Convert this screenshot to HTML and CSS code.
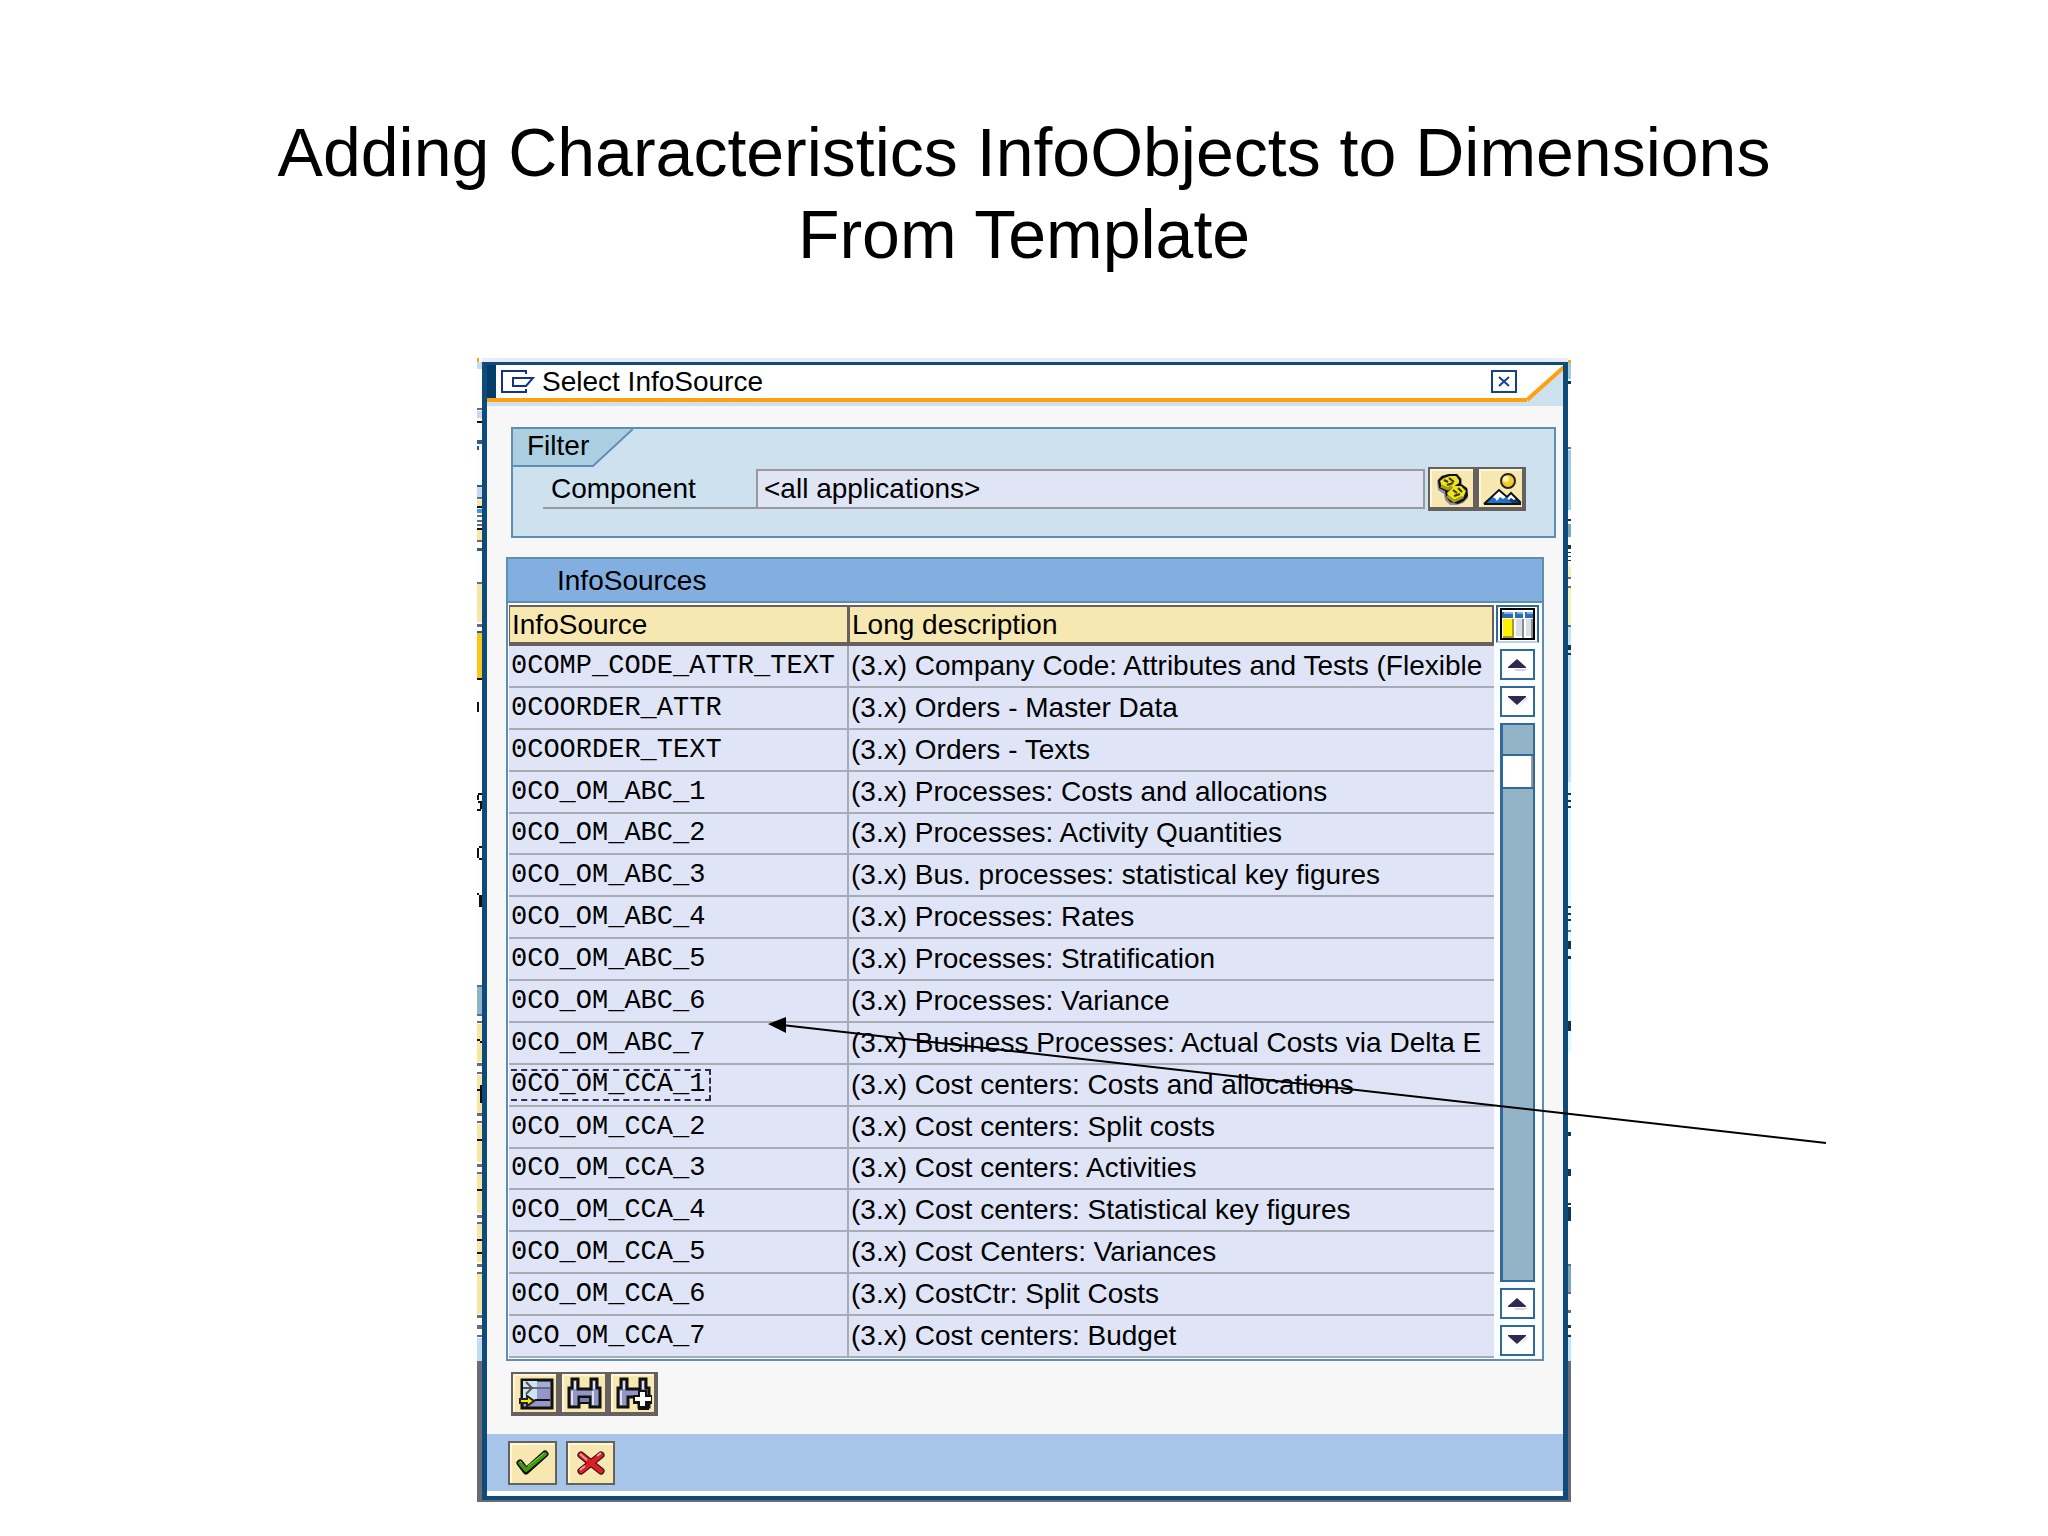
FILE: index.html
```html
<!DOCTYPE html>
<html lang="en">
<head>
    <meta charset="utf-8">
    <title>Adding Characteristics InfoObjects to Dimensions</title>
    <link rel="stylesheet" href="styles.css">
</head>
<body>
    <h1>Adding Characteristics InfoObjects to Dimensions<br>From Template</h1>

    <div class="figure">
        <!-- window behind the dialog, left edge -->
        <svg class="edge" viewBox="0 0 5 1144" preserveAspectRatio="none" shape-rendering="crispEdges">
            <path fill="#fdfdfd" d="M0 0h5v1144H0z"/>
            <path fill="#c5dcf0" d="M0 4h5v7H0zM0 53h5v7H0zM0 129h5v10H0zM0 980h5v23H0z"/>
            <path fill="#ffa010" d="M0 0h2v4H0z"/>
            <path fill="#f7e7a5" d="M0 142h5v6H0zM0 172h5v10H0zM0 226h5v38H0zM0 666h5v38H0zM0 717h5v38H0zM0 766h5v38H0zM0 816h5v39H0zM0 866h5v38H0zM0 916h5v40H0z"/>
            <path fill="#fcc41c" d="M0 275h5v46H0z"/>
            <path fill="#8fb4c6" d="M0 627h5v31H0z"/>
            <path fill="#3a9cec" d="M0 151h5v4H0z"/>
            <path fill="#2b5f8c" d="M0 82h5v4H0zM0 88h2v4H0zM0 127h5v2H0zM0 190h5v3H0zM0 273h5v2H0z"/>
            <path fill="#6b6b75" d="M0 50h5v2H0zM0 139h5v2H0zM0 157h5v2H0zM0 162h5v2H0zM0 166h5v2H0zM0 182h5v2H0zM0 224h5v2H0zM0 266h5v3H0zM0 627h5v2H0zM0 656h5v2H0zM0 663h5v2H0zM0 705h5v3H0zM0 714h5v2H0zM0 755h5v3H0zM0 763h5v2H0zM0 806h5v3H0zM0 814h5v2H0zM0 857h5v3H0zM0 864h5v2H0zM0 906h5v3H0zM0 914h5v2H0zM0 957h5v3H0zM0 967h5v4H0zM0 977h5v2H0zM0 1003h5v141H0z"/>
            <path fill="#111" d="M0 63h5v2H0zM0 148h5v2H0zM0 170h5v2H0zM0 320h5v2H0zM0 344h2v10H0zM1 435h4v2H1zM0 437h2v5H0zM1 443h4v2H1zM3 445h2v6H3zM0 451h4v2H0zM2 488h3v2H2zM0 490h2v10H0zM2 500h3v2H2zM0 535h2v2H0zM2 537h3v12H2zM0 681h3v2H0zM3 683h2v2H3zM0 731h5v2H0zM3 727h2v18H3zM0 781h5v2H0zM0 831h5v2H0zM0 881h5v2H0zM0 894h5v2H0z"/>
        </svg>

        <div class="dialog">
            <div class="titlebar">
                <div class="title">
                    <svg width="34" height="23" viewBox="0 0 34 23" fill="none" stroke="#14318c" stroke-width="2">
                        <path d="M25 4V1H1v21h24v-3"/>
                        <path d="M12 8h20l-7 8H12z"/>
                    </svg>
                    <span>Select InfoSource</span>
                    <button class="close" aria-label="Close">
                        <svg width="12" height="11" viewBox="0 0 12 11" stroke="#14418c" stroke-width="2"><path d="M1 1l10 9M11 1L1 10"/></svg>
                    </button>
                </div>
                <svg class="corner" viewBox="0 0 36 37" preserveAspectRatio="none">
                    <path fill="#cde1ee" d="M0 37L36 4v33z"/>
                    <path d="M0 35L37 2" stroke="#ffa010" stroke-width="4"/>
                </svg>
            </div>

            <div class="body">
                <div class="filter">
                    <div class="tab">
                        <svg viewBox="0 0 120 38" width="120" height="38">
                            <path d="M0 0h120L80 37H0z" fill="#abcfe0"/>
                            <path d="M120 0L80 37H0" fill="none" stroke="#5e8fb2" stroke-width="2"/>
                        </svg>
                        <span>Filter</span>
                    </div>
                    <div class="field">
                        <label for="component">Component</label>
                        <input id="component" type="text" value="&lt;all applications&gt;" readonly>
                        <div class="buttons">
                            <button aria-label="Select component">
                                <svg width="36" height="34" viewBox="0 0 36 34">
                                    <path d="M2 9l4-5 7-2h9l5 5v5l6 5v9l-5 5-6 2h-7l-5-5-1-6-6-4z" fill="#8d8ab0"/>
                                    <path d="M3 8l4-4 7-2h8l4 5v5l6 4 1 8-4 5-6 3-8-2-4-5-1-6-6-3z" fill="#111"/>
                                    <path d="M5 9l4-3 6-2h6l3 4v3l-9 6-8-2zM12 21l7-7h7l5 5-3 7-7 3-7-3z" fill="#ece420"/>
                                    <path d="M6 14l7 3 4-3M12 24l7 5 9-4" stroke="#a89e10" stroke-width="3" fill="none"/>
                                    <path d="M9 8l4 2M14 6l5 4M12 13l6-2M18 18l4 3M23 16l4 4M19 24l6-2" stroke="#3a3608" stroke-width="2"/>
                                </svg>
                            </button>
                            <button aria-label="Overview">
                                <svg width="38" height="34" viewBox="0 0 38 34">
                                    <circle cx="25" cy="9" r="7" fill="#f6c930" stroke="#222" stroke-width="2"/>
                                    <circle cx="23" cy="7" r="3" fill="#fff6a8"/>
                                    <path d="M16 33l12-12 10 10v2z" fill="#123c7c"/>
                                    <path d="M23 26l5-5 6 5-3 2-3-2-3 3z" fill="#fff"/>
                                    <path d="M1 32l15-14 14 14z" fill="#1d74cc"/>
                                    <path d="M9 25l7-7 7 7-3 2-3-2-3 4-2-3z" fill="#fff"/>
                                    <path d="M1 32l15-14 8 7 4-4 10 10M1 32h37" stroke="#111" stroke-width="2" fill="none"/>
                                </svg>
                            </button>
                        </div>
                    </div>
                </div>

                <div class="panel">
                    <h2>InfoSources</h2>
                    <div class="list">
                        <table>
                            <thead>
                                <tr><th class="name">InfoSource</th><th>Long description</th></tr>
                            </thead>
                            <tbody>
                                <tr><td class="name">0COMP_CODE_ATTR_TEXT</td><td>(3.x) Company Code: Attributes and Tests (Flexible</td></tr>
                                <tr><td class="name">0COORDER_ATTR</td><td>(3.x) Orders - Master Data</td></tr>
                                <tr><td class="name">0COORDER_TEXT</td><td>(3.x) Orders - Texts</td></tr>
                                <tr><td class="name">0CO_OM_ABC_1</td><td>(3.x) Processes: Costs and allocations</td></tr>
                                <tr><td class="name">0CO_OM_ABC_2</td><td>(3.x) Processes: Activity Quantities</td></tr>
                                <tr><td class="name">0CO_OM_ABC_3</td><td>(3.x) Bus. processes: statistical key figures</td></tr>
                                <tr><td class="name">0CO_OM_ABC_4</td><td>(3.x) Processes: Rates</td></tr>
                                <tr><td class="name">0CO_OM_ABC_5</td><td>(3.x) Processes: Stratification</td></tr>
                                <tr><td class="name">0CO_OM_ABC_6</td><td>(3.x) Processes: Variance</td></tr>
                                <tr><td class="name">0CO_OM_ABC_7</td><td>(3.x) Business Processes: Actual Costs via Delta E</td></tr>
                                <tr><td class="name"><span class="focused">0CO_OM_CCA_1</span></td><td>(3.x) Cost centers: Costs and allocations</td></tr>
                                <tr><td class="name">0CO_OM_CCA_2</td><td>(3.x) Cost centers: Split costs</td></tr>
                                <tr><td class="name">0CO_OM_CCA_3</td><td>(3.x) Cost centers: Activities</td></tr>
                                <tr><td class="name">0CO_OM_CCA_4</td><td>(3.x) Cost centers: Statistical key figures</td></tr>
                                <tr><td class="name">0CO_OM_CCA_5</td><td>(3.x) Cost Centers: Variances</td></tr>
                                <tr><td class="name">0CO_OM_CCA_6</td><td>(3.x) CostCtr: Split Costs</td></tr>
                                <tr><td class="name">0CO_OM_CCA_7</td><td>(3.x) Cost centers: Budget</td></tr>
                            </tbody>
                        </table>

                        <div class="side">
                            <button class="config" aria-label="Configure columns">
                                <svg width="35" height="32" viewBox="0 0 35 32" shape-rendering="crispEdges">
                                    <path fill="#000" d="M0 0h35v32H0z"/>
                                    <path fill="#fff" d="M2 2h31v28H2z"/>
                                    <path fill="#2c6cb0" d="M2 4h11v6H2zM15 4h8v6h-8zM25 4h8v6h-8z"/>
                                    <path fill="#7db4e6" d="M4 4h9v2H4zM17 4h6v2h-6zM27 4h6v2h-6z"/>
                                    <path fill="#fff200" d="M3 11h9v17H3z"/>
                                    <path fill="#a89a30" d="M12 11h2v19h-2zM3 28h10v2H3z"/>
                                    <path fill="#dcdce4" d="M16 11h6v17h-6zM26 11h5v17h-5z"/>
                                    <path fill="#8a8a92" d="M22 11h2v19h-2zM31 11h2v19h-2z"/>
                                </svg>
                            </button>
                            <button class="step" aria-label="Scroll up"><svg width="20" height="12" viewBox="0 0 20 12"><path d="M6 10h14l-4 2H8z" fill="#d3d3e6"/><path d="M9 0L0 8v1h18V8z" fill="#2d2b4f"/></svg></button>
                            <button class="step" aria-label="Scroll down"><svg width="20" height="12" viewBox="0 0 20 12"><path d="M18 2h2l-9 9z" fill="#d3d3e6"/><path d="M9 9L0 1V0h18v1z" fill="#2d2b4f"/></svg></button>
                            <div class="track"><div class="thumb"></div></div>
                            <button class="step" aria-label="Scroll up"><svg width="20" height="12" viewBox="0 0 20 12"><path d="M6 10h14l-4 2H8z" fill="#d3d3e6"/><path d="M9 0L0 8v1h18V8z" fill="#2d2b4f"/></svg></button>
                            <button class="step" aria-label="Scroll down"><svg width="20" height="12" viewBox="0 0 20 12"><path d="M18 2h2l-9 9z" fill="#d3d3e6"/><path d="M9 9L0 1V0h18v1z" fill="#2d2b4f"/></svg></button>
                        </div>
                    </div>
                </div>

                <div class="buttons tools">
                    <button aria-label="Choose">
                        <svg width="36" height="34" viewBox="0 0 36 34">
                            <path d="M4 3h30v28H4z" fill="#9498c8" stroke="#111" stroke-width="3"/>
                            <path d="M5 4h14v18H5z" fill="#cfe4f2"/>
                            <path d="M19 5h13v6H19z" fill="#a9add4"/>
                            <path d="M12 11h20" stroke="#666a90" stroke-width="2"/>
                            <path d="M17 23h15" stroke="#111" stroke-width="2"/>
                            <path d="M8 5l6 6-6 6M5 11h10" stroke="#555" stroke-width="2" fill="none"/>
                            <path d="M2 22h7v-3l7 5-7 5v-3H2z" fill="#ffe600" stroke="#222" stroke-width="2"/>
                        </svg>
                    </button>
                    <button aria-label="Find">
                        <svg width="36" height="34" viewBox="0 0 36 34">
                            <path d="M5 2h6v10h13V2h6v9h3v19H23V20H12v10H2V11h3z" fill="#9296c4" stroke="#111" stroke-width="3"/>
                            <path d="M8 4v8M5 14v14M27 4v8M26 14v14" stroke="#dfe0ee" stroke-width="2"/>
                            <path d="M13 26h9" stroke="#111" stroke-width="2"/>
                            <path d="M13 21h9v4h-9z" fill="#7a7eb0"/>
                        </svg>
                    </button>
                    <button aria-label="Find next">
                        <svg width="36" height="34" viewBox="0 0 36 34">
                            <path d="M5 2h6v10h13V2h6v9h3v19H23V20H12v10H2V11h3z" fill="#9296c4" stroke="#111" stroke-width="3"/>
                            <path d="M8 4v8M5 14v14M27 4v8" stroke="#dfe0ee" stroke-width="2"/>
                            <path d="M22 13h9v5h5v9h-3v6H22v-6h-5v-9h5z" fill="#111"/>
                            <path d="M24 15h5v5h6v4h-6v5h-5v-5h-5v-4h5z" fill="#fff"/>
                        </svg>
                    </button>
                </div>
            </div>

            <div class="footer">
                <button aria-label="Continue">
                    <svg width="34" height="26" viewBox="0 0 34 26">
                        <path d="M4 13l6 8L29 4" fill="none" stroke="#111" stroke-width="7" stroke-linejoin="round" stroke-linecap="round"/>
                        <path d="M4 13l6 7L29 4" fill="none" stroke="#3f9a12" stroke-width="4" stroke-linejoin="round" stroke-linecap="round"/>
                        <path d="M4 11l2 2M12 16L28 3" stroke="#8fd050" stroke-width="1"/>
                    </svg>
                </button>
                <button aria-label="Cancel">
                    <svg width="28" height="24" viewBox="0 0 28 24">
                        <path d="M4 4l20 16M24 4L4 20" stroke="#111" stroke-width="7" stroke-linecap="round"/>
                        <path d="M4 4l20 16M24 4L4 20" stroke="#e01c24" stroke-width="5" stroke-linecap="round"/>
                        <path d="M3 3l7 6M20 5l4-3M3 19l5-4" stroke="#f8a0a0" stroke-width="2"/>
                    </svg>
                </button>
            </div>
        </div>

        <!-- window behind the dialog, right edge -->
        <svg class="edge" viewBox="0 0 3 1144" preserveAspectRatio="none" shape-rendering="crispEdges">
            <path fill="#fdfdfd" d="M0 0h3v1144H0z"/>
            <path fill="#ffa010" d="M0 2h3v3H0z"/>
            <path fill="#9fcbe6" d="M0 5h3v16H0zM0 92h3v60H0z"/>
            <path fill="#c5e4f2" d="M0 268h3v156H0zM0 976h3v27H0z"/>
            <path fill="#e0fbff" d="M0 424h3v270H0z"/>
            <path fill="#f7f0b8" d="M0 208h3v11H0zM0 230h3v38H0z"/>
            <path fill="#7fa6b4" d="M0 166h3v13H0zM0 906h3v30H0z"/>
            <path fill="#6b6b75" d="M0 89h3v2H0zM0 219h3v2H0zM0 228h3v2H0zM0 267h3v2H0zM0 572h3v2H0zM0 906h3v2H0zM0 934h3v2H0zM0 952h3v3H0zM0 1003h3v141H0z"/>
            <path fill="#16334c" d="M0 23h3v3H0zM0 161h3v2H0zM0 187h3v4H0zM0 194h3v1H0zM0 198h3v1H0zM0 202h3v1H0zM0 287h3v5H0zM0 295h3v2H0zM0 435h3v2H0zM0 442h3v2H0zM0 448h3v2H0zM0 548h3v2H0zM0 555h3v2H0zM0 561h3v2H0zM0 583h3v8H0zM0 598h3v3H0zM0 663h3v10H0zM0 774h3v4H0zM0 811h3v7H0zM0 845h3v2H0zM0 849h3v14H0zM0 967h3v3H0zM0 977h3v2H0z"/>
        </svg>

        <svg class="arrow" width="1060" height="136" viewBox="0 0 1060 136">
            <path d="M14 9L1058 127" stroke="#000" stroke-width="2"/>
            <path d="M0 8L18 1v16z"/>
        </svg>
    </div>
</body>
</html>
```
FILE: styles.css
```css
* {
    box-sizing: border-box;
}
body {
    margin: 0;
    padding: 111px 20px 34px;
    background: #fff;
    color: #000;
    font-family: "Liberation Sans", Arial, sans-serif;
    font-size: 28px;
}
h1 {
    margin: 0 0 83px;
    font-size: 68px;
    font-weight: normal;
    line-height: 82px;
    text-align: center;
}
svg {
    display: block;
    flex: none;
}
button {
    display: flex;
    align-items: center;
    justify-content: center;
    padding: 0;
    border: 0;
    background: #f6e8b0;
    cursor: pointer;
}

.figure {
    position: relative;
    display: flex;
    max-width: 1094px;
    margin: 0 auto;
    padding: 4px 0 2px;
    background: linear-gradient(#e8ecf6 4px, #6b6b75 4px);
}
.edge {
    width: 5px;
    height: auto;
    margin: -4px 0 -2px;
}
.dialog + .edge {
    width: 3px;
}
.arrow {
    position: absolute;
    left: 291px;
    top: 658px;
    pointer-events: none;
}

.dialog {
    flex: 1;
    min-width: 0;
    border: 5px solid #0f4a78;
    border-top-width: 3px;
    border-bottom-width: 4px;
    background: #f7f7f7;
}
.titlebar {
    display: flex;
    height: 37px;
    background: #fff;
}
.title {
    display: flex;
    flex: 1;
    align-items: center;
    gap: 7px;
    padding: 0 10px 0 14px;
    background: linear-gradient(90deg, #003d68 9px, transparent 9px);
    border-bottom: 4px solid #ffa010;
}
.close {
    width: 26px;
    height: 23px;
    margin-left: auto;
    border: 2px solid #14418c;
    background: #fff;
}
.corner {
    width: 36px;
    height: 37px;
}

.body {
    padding: 21px 7px 18px 19px;
    border-top: 4px solid #cde1ee;
}
.filter {
    height: 111px;
    margin-left: 5px;
    border: 2px solid #5e8fb2;
    background: #cde1ee;
}
.tab {
    position: relative;
    height: 40px;
    padding-left: 14px;
    line-height: 34px;
}
.tab svg {
    position: absolute;
    left: 0;
    top: 0;
}
.tab span {
    position: relative;
}
.field {
    display: flex;
    align-items: center;
    padding: 0 28px 0 30px;
    height: 44px;
    margin-top: -2px;
}
.field label {
    width: 213px;
    height: 40px;
    padding-left: 8px;
    border-bottom: 2px solid #9a9a9e;
    line-height: 40px;
}
.field input {
    flex: 1;
    min-width: 0;
    height: 40px;
    margin-right: 3px;
    padding: 0 6px;
    border: 2px solid #9a9a9e;
    background: #e0e5f5;
    font: inherit;
}
.buttons {
    display: flex;
    gap: 6px;
    width: max-content;
    padding: 2px 4px 4px 2px;
    background: #66605f;
}
.buttons button {
    width: 43px;
    height: 38px;
    border: 2px solid #fdf8dc;
    border-right-width: 0;
    border-bottom-width: 0;
}

.panel {
    margin: 19px 12px 0 0;
    border: 2px solid #5e8fb2;
    background: #fcfdfe;
}
.panel h2 {
    margin: 0;
    padding: 1px 0 0 49px;
    border-bottom: 2px solid #5e8fb2;
    background: #83aee0;
    font-size: 28px;
    font-weight: normal;
    line-height: 41px;
}
.list {
    display: flex;
    padding: 2px 7px 1px 1px;
}
table {
    flex: 1;
    min-width: 0;
    height: 753px;
    border-spacing: 0;
    table-layout: fixed;
}
th, td {
    height: 41px;
    padding: 0 0 0 2px;
    overflow: hidden;
    border-bottom: 2px solid #a5acb4;
    background: #dfe5f6;
    font-weight: normal;
    line-height: 32px;
    text-align: left;
    white-space: nowrap;
}
th {
    border: 2px solid #66605f;
    border-bottom-width: 4px;
    border-left-width: 1px;
    background: #f6e8b0;
}
.name {
    width: 340px;
    border-right: 2px solid #a5acb4;
}
th.name {
    border-right-color: #66605f;
}
td.name {
    padding-left: 2px;
    font-family: "Liberation Mono", monospace;
    font-size: 27px;
}
.focused {
    display: inline-block;
    height: 32px;
    padding-right: 4px;
    border: 2px dashed #2d2b4f;
    border-left: 0;
    line-height: 26px;
}

.side {
    display: flex;
    flex-direction: column;
    gap: 6px;
    width: 35px;
    margin: 0 0 2px 6px;
}
.config {
    height: 38px;
    margin: 0 -4px;
    border: 2px solid #2f6a9b;
    border-bottom-color: #b8d4e6;
    background: #fff;
}
.step {
    flex: none;
    height: 31px;
    border: 2px solid #2f6a9b;
    background: #fff;
}
.track {
    flex: 1;
    padding-top: 29px;
    border: 2px solid #2f6a9b;
    border-left-width: 3px;
    background: #93b4c6;
}
.thumb {
    height: 35px;
    border: 2px solid #2f6a9b;
    border-width: 2px 0;
    background: #fff;
    box-shadow: inset -2px 0 #9a9a9e;
}
.tools {
    margin: 11px 0 0 5px;
}

.footer {
    display: flex;
    gap: 9px;
    padding: 7px 21px 6px;
    border-bottom: 4px solid #fff;
    background: #a6c5e8;
}
.footer button {
    width: 49px;
    height: 44px;
    border: 2px solid #66605f;
    box-shadow: inset 2px 2px #fdf8dc;
}
```
